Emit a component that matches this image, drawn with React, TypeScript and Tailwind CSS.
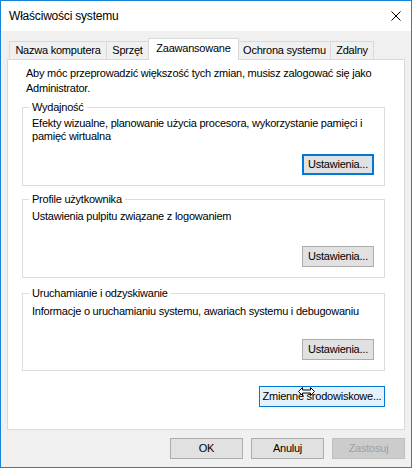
import React from "react";

type BtnVariant = "normal" | "focused" | "hover" | "disabled";

function Btn({
  children,
  variant = "normal",
  className = "",
}: {
  children: React.ReactNode;
  variant?: BtnVariant;
  className?: string;
}) {
  const v =
    variant === "focused"
      ? "border-2 border-[#0078d7] bg-[#e1e1e1] text-black"
      : variant === "hover"
      ? "border border-[#0078d7] bg-[#e5f1fb] text-black"
      : variant === "disabled"
      ? "border border-[#bfbfbf] bg-[#cccccc] text-[#a0a0a0]"
      : "border border-[#adadad] bg-[#e1e1e1] text-black";
  return (
    <div
      className={`h-[21px] flex items-center justify-center leading-[15px] whitespace-nowrap ${v} ${className}`}
    >
      {children}
    </div>
  );
}

function Group({
  title,
  children,
  className = "",
  heightClass,
}: {
  title: string;
  children: React.ReactNode;
  className?: string;
  heightClass: string;
}) {
  return (
    <div
      className={`flex flex-col border border-[#dcdcdc] w-[363px] ${heightClass} ${className}`}
    >
      <span className="-mt-[8px] ml-[6px] px-[3px] bg-white w-fit leading-[15px] whitespace-nowrap">
        {title}
      </span>
      {children}
    </div>
  );
}

export default function App() {
  return (
    <div className="w-[412px] h-[468px] bg-white font-['Liberation_Sans',Arial,sans-serif] text-[11px] tracking-[-0.23px] text-black">
      <div className="relative w-[412px] h-[468px] border border-[#1883d7] flex flex-col">
        {/* Title bar */}
        <div className="h-[30px] bg-white flex items-center justify-between pl-[8px]">
          <span className="text-[12px] tracking-[-0.2px] leading-[15px] whitespace-nowrap">
            Właściwości systemu
          </span>
          <svg width="10" height="10" viewBox="0 0 10 10" className="mr-[10px]">
            <path d="M0.5 0.5 L9.5 9.5 M9.5 0.5 L0.5 9.5" stroke="#000" strokeWidth="1" />
          </svg>
        </div>

        {/* Body */}
        <div className="flex-1 bg-[#f0f0f0] px-[6px] pt-[7px] flex flex-col">
          {/* Tabs */}
          <div className="flex items-end h-[21px] ml-[2px]">
            <div className="w-[98px] h-[18px] border-l border-t border-r border-[#d9d9d9] bg-[#f0f0f0] flex items-center justify-center leading-[15px] whitespace-nowrap">
              Nazwa komputera
            </div>
            <div className="-ml-px w-[43px] h-[18px] border-l border-t border-r border-[#d9d9d9] bg-[#f0f0f0] flex items-center justify-center leading-[15px] whitespace-nowrap">
              Sprzęt
            </div>
            <div className="relative z-10 -ml-px -mb-px w-[91px] h-[22px] border-l border-t border-r border-[#d9d9d9] bg-white flex items-center justify-center pb-[2px] leading-[15px] whitespace-nowrap">
              Zaawansowane
            </div>
            <div className="-ml-px w-[93px] h-[18px] border-l border-t border-r border-[#d9d9d9] bg-[#f0f0f0] flex items-center justify-center leading-[15px] whitespace-nowrap">
              Ochrona systemu
            </div>
            <div className="-ml-px w-[44px] h-[18px] border-l border-t border-r border-[#d9d9d9] bg-[#f0f0f0] flex items-center justify-center leading-[15px] whitespace-nowrap">
              Zdalny
            </div>
          </div>

          {/* Panel */}
          <div className="h-[371px] border border-[#d9d9d9] bg-white pl-[14px] pr-[18px] pt-[6px] flex flex-col">
            <p className="ml-[4px] leading-[15px] whitespace-nowrap">
              Aby móc przeprowadzić większość tych zmian, musisz zalogować się jako
              <br />
              Administrator.
            </p>

            <Group title="Wydajność" heightClass="h-[79px]" className="mt-[11px]">
              <p className="mt-[2px] pl-[9px] leading-[13px] whitespace-nowrap">
                Efekty wizualne, planowanie użycia procesora, wykorzystanie pamięci i
                <br />
                pamięć wirtualna
              </p>
              <Btn variant="focused" className="mt-auto mb-[10px] mr-[10px] self-end w-[72px]">
                Ustawienia...
              </Btn>
            </Group>

            <Group title="Profile użytkownika" heightClass="h-[79px]" className="mt-[13px]">
              <p className="mt-[2px] pl-[9px] leading-[15px] whitespace-nowrap">
                Ustawienia pulpitu związane z logowaniem
              </p>
              <Btn className="mt-auto mb-[10px] mr-[10px] self-end w-[72px]">Ustawienia...</Btn>
            </Group>

            <Group title="Uruchamianie i odzyskiwanie" heightClass="h-[78px]" className="mt-[15px]">
              <p className="mt-[3px] pl-[9px] leading-[15px] whitespace-nowrap">
                Informacje o uruchamianiu systemu, awariach systemu i debugowaniu
              </p>
              <Btn className="mt-auto mb-[10px] mr-[10px] self-end w-[72px]">Ustawienia...</Btn>
            </Group>

            <Btn variant="hover" className="mt-[15px] self-end mr-[1px] w-[126px]">
              Zmienne środowiskowe...
            </Btn>
          </div>

          {/* Bottom buttons */}
          <div className="mt-[8px] flex justify-end gap-[8px]">
            <Btn className="w-[73px]">OK</Btn>
            <Btn className="w-[73px]">Anuluj</Btn>
            <Btn variant="disabled" className="w-[73px]">
              Zastosuj
            </Btn>
          </div>
        </div>

        {/* Mouse cursor overlay */}
        <svg
          width="18"
          height="10"
          viewBox="0 0 18 10"
          className="absolute left-[297px] top-[386px] z-20"
        >
          <path
            d="M0.5 4.5 L4.5 0.5 L4.5 3 L12.5 3 L12.5 0.5 L16.5 4.5 L12.5 8.5 L12.5 6 L4.5 6 L4.5 8.5 Z"
            fill="#fff"
            stroke="#000"
            strokeWidth="1"
            strokeLinejoin="miter"
          />
        </svg>
      </div>
    </div>
  );
}
